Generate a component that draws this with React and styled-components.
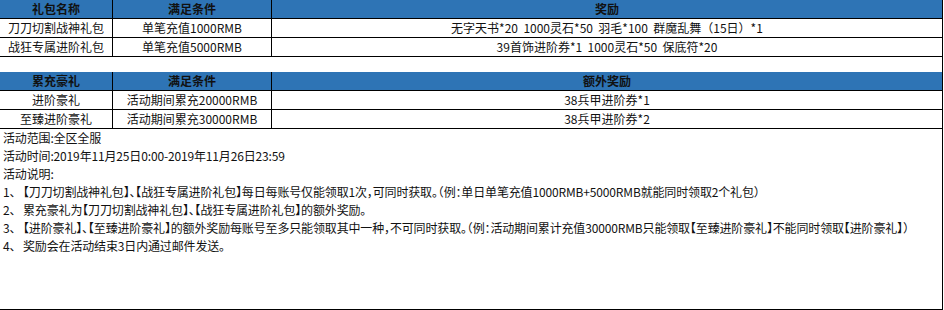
import styled, { createGlobalStyle } from "styled-components"

const Global = createGlobalStyle`
    body {
        margin: 0;
        background: #ffffff;
        font-family: "Noto Sans CJK SC", "Microsoft YaHei", sans-serif;
        color: #111111;
    }
`

const Sheet = styled.div`
    width: 943px;
    height: 310px;
    box-sizing: border-box;
    border-right: 1px solid #000;
    border-bottom: 1px solid #000;
    display: flex;
    flex-direction: column;
`

const Table = styled.div`
    display: grid;
    grid-template-columns: 113px 159px 1fr;
    margin-top: ${props => props.$gap || 0}px;
`

const Cell = styled.div`
    height: 18px;
    line-height: 18px;
    font-size: 12px;
    text-align: center;
    white-space: pre;
    overflow: hidden;
    border-bottom: 1px solid #000;
    border-right: ${props => props.$last ? "none" : "1px solid #000"};
    background: ${props => props.$head ? "#2e74b5" : "#ffffff"};
    font-weight: ${props => props.$head ? 700 : 400};
    color: #111;
`

const Notes = styled.div`
    padding-left: 3px;
    font-size: 12px;
    line-height: 18px;
    font-feature-settings: "halt";
`

const Line = styled.div`
    white-space: nowrap;
    letter-spacing: -0.15px;
`

const Num = styled.span`
    display: inline-block;
    width: 20px;
`

const packs = [
    ["刀刀切割战神礼包", "单笔充值1000RMB", "无字天书*20  1000灵石*50  羽毛*100  群魔乱舞（15日）*1"],
    ["战狂专属进阶礼包", "单笔充值5000RMB", "39首饰进阶券*1  1000灵石*50  保底符*20"],
]

const extras = [
    ["进阶豪礼", "活动期间累充20000RMB", "38兵甲进阶券*1"],
    ["至臻进阶豪礼", "活动期间累充30000RMB", "38兵甲进阶券*2"],
]

const info = [
    "活动范围:全区全服",
    "活动时间:2019年11月25日0:00-2019年11月26日23:59",
    "活动说明:",
]

const rules = [
    "【刀刀切割战神礼包】、【战狂专属进阶礼包】每日每账号仅能领取1次，可同时获取。（例：单日单笔充值1000RMB+5000RMB就能同时领取2个礼包）",
    "累充豪礼为【刀刀切割战神礼包】、【战狂专属进阶礼包】的额外奖励。",
    "【进阶豪礼】、【至臻进阶豪礼】的额外奖励每账号至多只能领取其中一种，不可同时获取。（例：活动期间累计充值30000RMB只能领取【至臻进阶豪礼】不能同时领取【进阶豪礼】）",
    "奖励会在活动结束3日内通过邮件发送。",
]

const Block = ({ head, rows, gap }) => (
    <Table $gap={gap}>
        {head.map((h, i) => (
            <Cell key={h} $head $last={i === 2}>{h}</Cell>
        ))}
        {rows.map(r => r.map((c, i) => (
            <Cell key={r[0] + i} $last={i === 2}>{c}</Cell>
        )))}
    </Table>
)

const App = () => {
    return (
        <>
            <Global />
            <Sheet>
                <Block head={["礼包名称", "满足条件", "奖励"]} rows={packs} />
                <Block head={["累充豪礼", "满足条件", "额外奖励"]} rows={extras} gap={15} />
                <Notes>
                    {info.map(n => <Line key={n}>{n}</Line>)}
                    {rules.map((n, i) => (
                        <Line key={n}><Num>{i + 1}、</Num>{n}</Line>
                    ))}
                </Notes>
            </Sheet>
        </>
    )
}

export default App
